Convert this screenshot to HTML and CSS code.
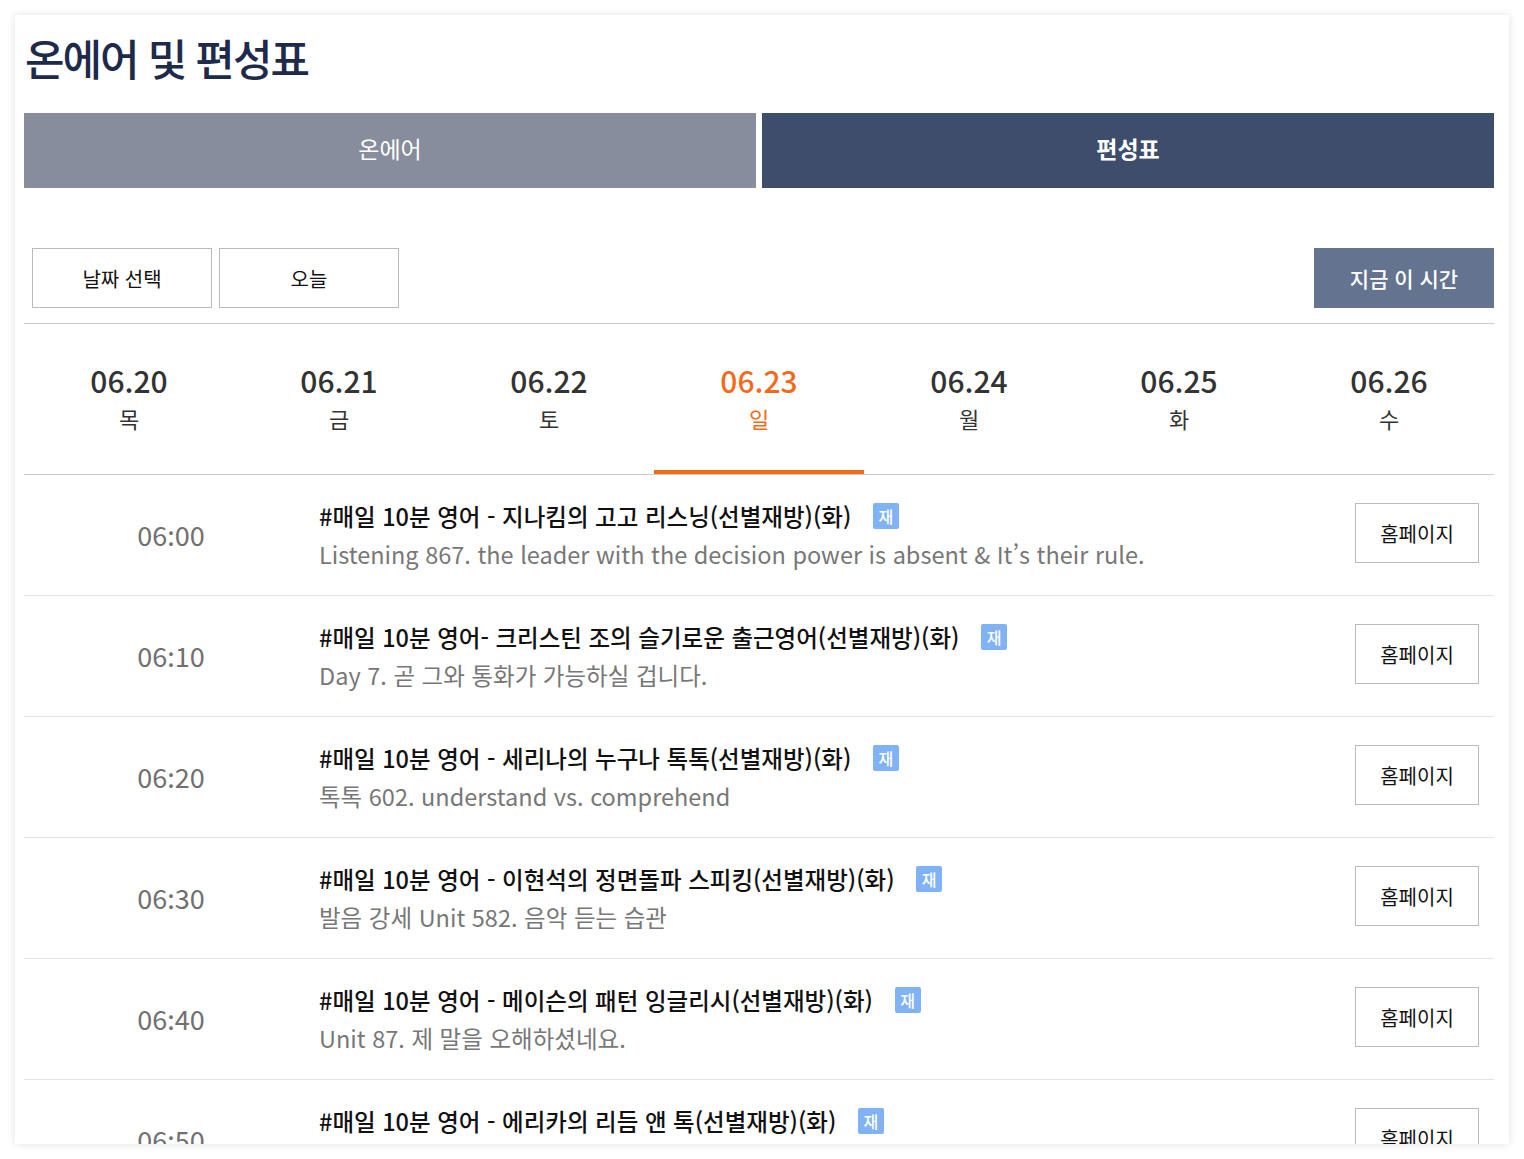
FILE: index.html
```html
<!DOCTYPE html>
<html lang="ko">
<head>
<meta charset="utf-8">
<title>온에어 및 편성표</title>
<link rel="stylesheet" href="styles.css">
</head>
<body>
<div class="card">
  <h1 class="title">온에어 및 편성표</h1>
  <div class="tabs">
    <div class="tab tab-onair">온에어</div>
    <div class="tab tab-schedule">편성표</div>
  </div>
  <div class="toolbar">
    <div class="toolbar-left">
      <button class="btn-outline">날짜 선택</button>
      <button class="btn-outline">오늘</button>
    </div>
    <button class="btn-now">지금 이 시간</button>
  </div>
  <div class="dates">
    <div class="date"><span class="date-num">06.20</span><span class="date-day">목</span></div>
    <div class="date"><span class="date-num">06.21</span><span class="date-day">금</span></div>
    <div class="date"><span class="date-num">06.22</span><span class="date-day">토</span></div>
    <div class="date active"><span class="date-num">06.23</span><span class="date-day">일</span></div>
    <div class="date"><span class="date-num">06.24</span><span class="date-day">월</span></div>
    <div class="date"><span class="date-num">06.25</span><span class="date-day">화</span></div>
    <div class="date"><span class="date-num">06.26</span><span class="date-day">수</span></div>
  </div>
  <ul class="list">
    <li class="row">
      <div class="time" lang="en">06:00</div>
      <div class="info">
        <div class="prog">#매일 10분 영어 - 지나킴의 고고 리스닝(선별재방)(화) <span class="badge">재</span></div>
        <div class="sub">Listening 867. the leader with the decision power is absent &amp; It’s their rule.</div>
      </div>
      <button class="btn-home">홈페이지</button>
    </li>
    <li class="row">
      <div class="time" lang="en">06:10</div>
      <div class="info">
        <div class="prog">#매일 10분 영어- 크리스틴 조의 슬기로운 출근영어(선별재방)(화) <span class="badge">재</span></div>
        <div class="sub">Day 7. 곧 그와 통화가 가능하실 겁니다.</div>
      </div>
      <button class="btn-home">홈페이지</button>
    </li>
    <li class="row">
      <div class="time" lang="en">06:20</div>
      <div class="info">
        <div class="prog">#매일 10분 영어 - 세리나의 누구나 톡톡(선별재방)(화) <span class="badge">재</span></div>
        <div class="sub">톡톡 602. understand vs. comprehend</div>
      </div>
      <button class="btn-home">홈페이지</button>
    </li>
    <li class="row">
      <div class="time" lang="en">06:30</div>
      <div class="info">
        <div class="prog">#매일 10분 영어 - 이현석의 정면돌파 스피킹(선별재방)(화) <span class="badge">재</span></div>
        <div class="sub">발음 강세 Unit 582. 음악 듣는 습관</div>
      </div>
      <button class="btn-home">홈페이지</button>
    </li>
    <li class="row">
      <div class="time" lang="en">06:40</div>
      <div class="info">
        <div class="prog">#매일 10분 영어 - 메이슨의 패턴 잉글리시(선별재방)(화) <span class="badge">재</span></div>
        <div class="sub">Unit 87. 제 말을 오해하셨네요.</div>
      </div>
      <button class="btn-home">홈페이지</button>
    </li>
    <li class="row">
      <div class="time" lang="en">06:50</div>
      <div class="info">
        <div class="prog">#매일 10분 영어 - 에리카의 리듬 앤 톡(선별재방)(화) <span class="badge">재</span></div>
        <div class="sub">Unit 12. 리듬으로 말해요.</div>
      </div>
      <button class="btn-home">홈페이지</button>
    </li>
  </ul>
</div>
</body>
</html>
```

FILE: styles.css
```css
html, body {
  margin: 0;
  padding: 0;
  background: #ffffff;
  overflow: hidden;
}
body {
  font-family: "Noto Sans CJK KR", "Noto Sans", sans-serif;
  color: #222;
}
.card {
  margin: 15px;
  height: 1129px;
  width: 1494px;
  box-sizing: border-box;
  padding: 0 15px 0 9px;
  background: #fff;
  box-shadow: 0 0 8px rgba(0, 0, 0, 0.12);
  overflow: hidden;
}
.title {
  margin: 0;
  padding: 9px 0 0 1px;
  height: 84px;
  box-sizing: border-box;
  font-size: 43px;
  font-weight: 500;
  color: #1d2a4a;
  letter-spacing: -2px;
  line-height: 66px;
}
.tabs {
  margin-top: 14px;
  display: flex;
  gap: 6px;
}
.tab {
  flex: 1;
  height: 75px;
  box-sizing: border-box;
  padding-bottom: 6px;
  display: flex;
  align-items: center;
  justify-content: center;
  color: #fff;
  font-size: 23px;
}
.tab-onair {
  background: #878d9c;
}
.tab-schedule {
  background: #3d4d6b;
  font-weight: 700;
}
.toolbar {
  margin-top: 60px;
  display: flex;
  justify-content: space-between;
  padding: 0 0 15px 0;
  border-bottom: 1px solid #cccccc;
}
.toolbar-left {
  display: flex;
  gap: 7px;
  padding-left: 8px;
}
button {
  font-family: "Noto Sans CJK KR", "Noto Sans", sans-serif;
  cursor: pointer;
}
.btn-outline {
  width: 180px;
  height: 60px;
  background: #fff;
  border: 1px solid #bbbbbb;
  font-size: 20px;
  color: #111;
  padding: 0;
}
.btn-now {
  width: 180px;
  height: 60px;
  background: #637390;
  border: 0;
  color: #fff;
  font-size: 21px;
  font-weight: 500;
  padding: 0;
}
.dates {
  display: grid;
  grid-template-columns: repeat(7, 1fr);
  border-bottom: 1px solid #cccccc;
}
.date {
  height: 150px;
  box-sizing: border-box;
  display: flex;
  flex-direction: column;
  align-items: center;
  padding-top: 36px;
  color: #333;
}
.date-num {
  font-size: 30px;
  font-weight: 500;
  line-height: 40px;
}
.date-day {
  font-size: 22px;
  line-height: 36px;
}
.date.active {
  color: #f26b1d;
  border-bottom: 4px solid #f26b1d;
}
.list {
  list-style: none;
  margin: 0;
  padding: 0;
}
.row {
  height: 121px;
  box-sizing: border-box;
  border-bottom: 1px solid #e3e3e3;
  display: flex;
  align-items: center;
  padding-right: 15px;
}
.time {
  width: 294px;
  flex: none;
  text-align: center;
  font-family: "Noto Sans CJK SC", "Noto Sans CJK KR", sans-serif;
  font-size: 27px;
  color: #707070;
  padding-bottom: 2px;
}
.info {
  flex: 1;
  padding-left: 1px;
}
.prog {
  font-size: 23.5px;
  font-weight: 500;
  color: #111;
  line-height: 38px;
}
.badge {
  display: inline-block;
  width: 26px;
  height: 26px;
  line-height: 26px;
  text-align: center;
  background: #80b2f6;
  color: #fff;
  font-size: 16px;
  font-weight: 500;
  border-radius: 2px;
  margin-left: 15px;
  vertical-align: 3px;
}
.sub {
  font-size: 23.5px;
  color: #777;
  line-height: 38px;
}
.btn-home {
  flex: none;
  width: 124px;
  height: 60px;
  background: #fff;
  border: 1px solid #bbbbbb;
  font-size: 20px;
  color: #111;
  padding: 0;
  margin-top: -4px;
}
```
